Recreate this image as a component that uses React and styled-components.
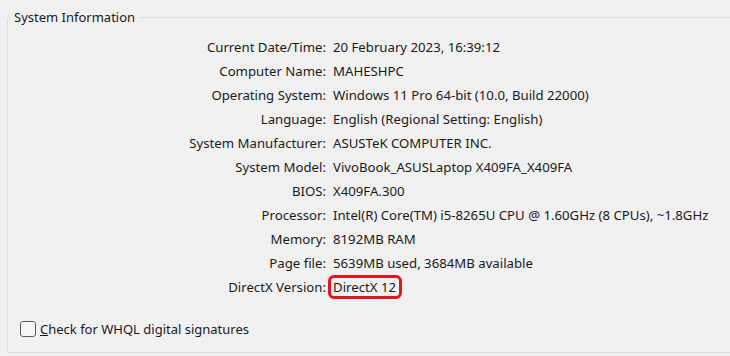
import React from 'react';
import styled, { createGlobalStyle } from 'styled-components';

const GlobalStyle = createGlobalStyle`
  html, body {
    margin: 0;
    padding: 0;
    background: #f0f0f0;
    overflow: hidden;
  }
  body {
    font-family: "Noto Sans", "Open Sans", sans-serif;
    color: #1a1a1a;
  }
`;

const Page = styled.div`
  width: 730px;
  height: 356px;
  padding: 8px 0 0 7px;
  box-sizing: border-box;
`;

const GroupBox = styled.fieldset`
  margin: 0;
  padding: 0;
  width: 740px;
  height: 345px;
  box-sizing: border-box;
  border: 1px solid #dcdcdc;
  border-radius: 2px;
`;

const Caption = styled.legend`
  margin-left: 2px;
  padding: 0 4px 0 4px;
  font-size: 13px;
  line-height: 18px;
  color: #1a1a1a;
`;

const InfoGrid = styled.div`
  display: grid;
  grid-template-columns: 318px auto;
  column-gap: 7px;
  margin-top: 9px;
  font-size: 13.2px;
  line-height: 24px;
`;

const Label = styled.div`
  text-align: right;
  white-space: nowrap;
`;

const Value = styled.div`
  white-space: nowrap;
`;

const Highlight = styled.span`
  position: relative;

  &::after {
    content: '';
    position: absolute;
    left: -5px;
    right: -6px;
    top: -3px;
    bottom: -3px;
    border: 3px solid #e5141c;
    border-radius: 6px;
  }
`;

const CheckRow = styled.label`
  display: flex;
  align-items: center;
  gap: 4px;
  margin: 21px 0 0 12px;
  font-size: 13px;
  line-height: 18px;
`;

const CheckBox = styled.span`
  width: 16px;
  height: 16px;
  box-sizing: border-box;
  border: 1px solid #5c5c5c;
  border-radius: 3px;
  background: #f7f7f7;
`;

const rows = [
  ['Current Date/Time:', '20 February 2023, 16:39:12'],
  ['Computer Name:', 'MAHESHPC'],
  ['Operating System:', 'Windows 11 Pro 64-bit (10.0, Build 22000)'],
  ['Language:', 'English (Regional Setting: English)'],
  ['System Manufacturer:', 'ASUSTeK COMPUTER INC.'],
  ['System Model:', 'VivoBook_ASUSLaptop X409FA_X409FA'],
  ['BIOS:', 'X409FA.300'],
  ['Processor:', 'Intel(R) Core(TM) i5-8265U CPU @ 1.60GHz (8 CPUs), ~1.8GHz'],
  ['Memory:', '8192MB RAM'],
  ['Page file:', '5639MB used, 3684MB available'],
];

export default function App() {
  return (
    <>
      <GlobalStyle />
      <Page>
        <GroupBox>
          <Caption>System Information</Caption>
          <InfoGrid>
            {rows.map(([label, value]) => (
              <React.Fragment key={label}>
                <Label>{label}</Label>
                <Value>{value}</Value>
              </React.Fragment>
            ))}
            <Label>DirectX Version:</Label>
            <Value>
              <Highlight>DirectX 12</Highlight>
            </Value>
          </InfoGrid>
          <CheckRow>
            <CheckBox />
            <span>
              <u>C</u>heck for WHQL digital signatures
            </span>
          </CheckRow>
        </GroupBox>
      </Page>
    </>
  );
}
